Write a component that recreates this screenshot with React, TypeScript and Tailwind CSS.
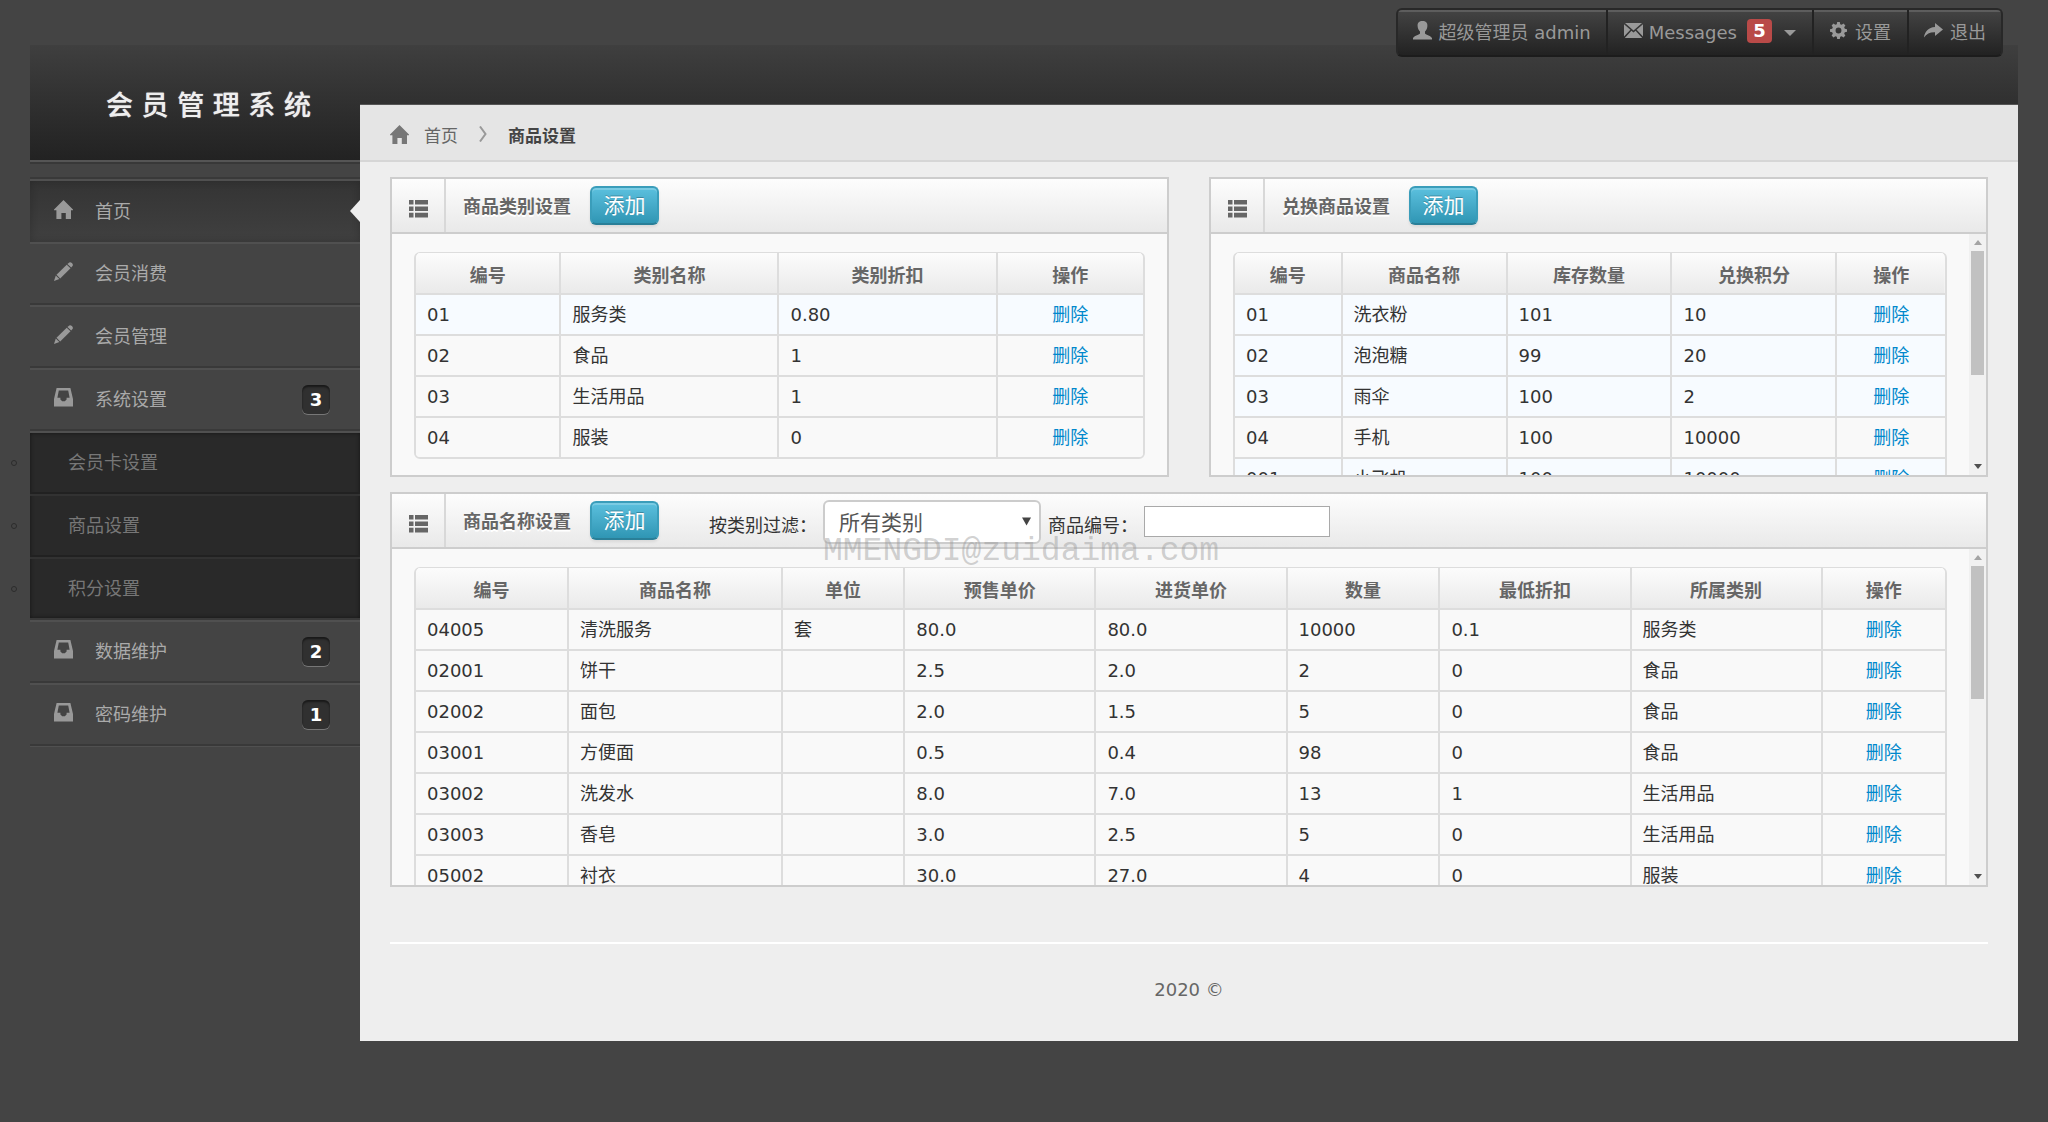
import React, { useState } from 'react';

interface IconProps {
    className?: string;
}

const HomeIcon: React.FC<IconProps> = ({ className }) => (
    <svg viewBox="0 0 19 19" className={className} fill="currentColor" aria-hidden="true">
        <path d="M9.5 0L19 9.4V10.2H17V19H11.8V13H7.4V19H2.4V10.2H0V9.4Z" />
    </svg>
);

const PencilIcon: React.FC<IconProps> = ({ className }) => (
    <svg viewBox="0 0 19 19" className={className} fill="currentColor" aria-hidden="true">
        <path d="M14.4 1.2Q16 -.6 17.9 1.1Q19.8 2.9 18.1 4.6L17.2 5.5L13.4 2Z" />
        <path d="M12.7 2.7L16.5 6.3L6.2 16.4L2.5 12.7Z" />
        <path d="M1.8 13.5L5.4 17L0 19Z" />
    </svg>
);

const InboxIcon: React.FC<IconProps> = ({ className }) => (
    <svg viewBox="0 0 19 19" className={className} fill="currentColor" aria-hidden="true">
        <path fillRule="evenodd" d="M2.6 0H16.4L19 11V18.5H0V11ZM4.8 2.4L3.4 9.8H6.4V11.4L8.2 13.2H10.8L12.6 11.4V9.8H15.6L14.2 2.4Z" />
    </svg>
);

const UserIcon: React.FC<IconProps> = ({ className }) => (
    <svg viewBox="0 0 19 19" className={className} fill="currentColor" aria-hidden="true">
        <path d="M9.5 0C12.8 0 14.6 1.8 14.4 5C14.3 7.4 13.3 9.3 12 10.6V12.4C12.9 13.8 18.4 14.7 19 17.2V18.6H0V17.2C.6 14.7 6.1 13.8 7 12.4V10.6C5.7 9.3 4.7 7.4 4.6 5C4.4 1.8 6.2 0 9.5 0Z" />
    </svg>
);

const EnvelopeIcon: React.FC<IconProps> = ({ className }) => (
    <svg viewBox="0 0 19 15" className={className} fill="currentColor" aria-hidden="true">
        <path d="M1 0H18L9.5 7.4ZM0 1.2L6.4 6.8L0 13.4ZM19 1.2V13.4L12.6 6.8ZM7.4 7.8L9.5 9.6L11.6 7.8L18.2 15H.8Z" />
    </svg>
);

const CogIcon: React.FC<IconProps> = ({ className }) => (
    <svg viewBox="0 0 18 18" className={className} fill="currentColor" aria-hidden="true">
        <path
            fillRule="evenodd"
            d="M7.6 0H10.4L10.8 2.3L12.4 3L14.3 1.7L16.3 3.7L15 5.6L15.7 7.2L18 7.6V10.4L15.7 10.8L15 12.4L16.3 14.3L14.3 16.3L12.4 15L10.8 15.7L10.4 18H7.6L7.2 15.7L5.6 15L3.7 16.3L1.7 14.3L3 12.4L2.3 10.8L0 10.4V7.6L2.3 7.2L3 5.6L1.7 3.7L3.7 1.7L5.6 3L7.2 2.3ZM9 5.9A3.1 3.1 0 1 0 9 12.1A3.1 3.1 0 1 0 9 5.9Z"
        />
    </svg>
);

const ShareIcon: React.FC<IconProps> = ({ className }) => (
    <svg viewBox="0 0 19 15" className={className} fill="currentColor" aria-hidden="true">
        <path d="M11 0L19 6.6L11 13V9.2C6 9 2.6 10.6 0 14.5C.6 8.6 4.4 4.4 11 4Z" />
    </svg>
);

const ListIcon: React.FC<IconProps> = ({ className }) => (
    <svg viewBox="0 0 19 18" className={className} fill="currentColor" aria-hidden="true">
        <path d="M0 0H4.5V4.6H0ZM6 0H19V4.6H6ZM0 6.4H4.5V11H0ZM6 6.4H19V11H6ZM0 12.8H4.5V17.4H0ZM6 12.8H19V17.4H6Z" />
    </svg>
);

interface Row {
    cells: string[];
    highlight?: boolean;
}

interface Column {
    title: string;
    width: string;
}

const CATEGORY_COLUMNS: Column[] = [
    { title: '编号', width: 'w-[20%]' },
    { title: '类别名称', width: 'w-[30%]' },
    { title: '类别折扣', width: 'w-[30%]' },
    { title: '操作', width: 'w-[20%]' },
];

const CATEGORY_ROWS: Row[] = [
    { cells: ['01', '服务类', '0.80'], highlight: true },
    { cells: ['02', '食品', '1'] },
    { cells: ['03', '生活用品', '1'] },
    { cells: ['04', '服装', '0'] },
];

const GIFT_COLUMNS: Column[] = [
    { title: '编号', width: 'w-[15%]' },
    { title: '商品名称', width: 'w-[23%]' },
    { title: '库存数量', width: 'w-[23%]' },
    { title: '兑换积分', width: 'w-[23%]' },
    { title: '操作', width: 'w-[15%]' },
];

const GIFT_ROWS: Row[] = [
    { cells: ['01', '洗衣粉', '101', '10'], highlight: true },
    { cells: ['02', '泡泡糖', '99', '20'], highlight: true },
    { cells: ['03', '雨伞', '100', '2'], highlight: true },
    { cells: ['04', '手机', '100', '10000'] },
    { cells: ['001', '小飞机', '100', '10000'], highlight: true },
];

const GOODS_COLUMNS: Column[] = [
    { title: '编号', width: 'w-[10%]' },
    { title: '商品名称', width: 'w-[14%]' },
    { title: '单位', width: 'w-[8%]' },
    { title: '预售单价', width: 'w-[12.5%]' },
    { title: '进货单价', width: 'w-[12.5%]' },
    { title: '数量', width: 'w-[10%]' },
    { title: '最低折扣', width: 'w-[12.5%]' },
    { title: '所属类别', width: 'w-[12.5%]' },
    { title: '操作', width: 'w-[8%]' },
];

const GOODS_ROWS: Row[] = [
    { cells: ['04005', '清洗服务', '套', '80.0', '80.0', '10000', '0.1', '服务类'] },
    { cells: ['02001', '饼干', '', '2.5', '2.0', '2', '0', '食品'] },
    { cells: ['02002', '面包', '', '2.0', '1.5', '5', '0', '食品'] },
    { cells: ['03001', '方便面', '', '0.5', '0.4', '98', '0', '食品'] },
    { cells: ['03002', '洗发水', '', '8.0', '7.0', '13', '1', '生活用品'] },
    { cells: ['03003', '香皂', '', '3.0', '2.5', '5', '0', '生活用品'] },
    { cells: ['05002', '衬衣', '', '30.0', '27.0', '4', '0', '服装'] },
];

const DataTable: React.FC<{ columns: Column[]; rows: Row[] }> = ({ columns, rows }) => (
    <div className="border-2 border-t border-[#ddd] rounded-md overflow-hidden">
        <table className="w-full table-fixed border-separate border-spacing-0">
            <thead>
                <tr className="bg-linear-to-b from-[#fcfcfc] to-[#e9e9e9]">
                    {columns.map((col) => (
                        <th
                            key={col.title}
                            className={`${col.width} h-[42px] p-0 pt-[6px] border-b-2 border-r-2 last:border-r-0 border-[#ddd] font-bold text-[#666] text-center`}
                        >
                            {col.title}
                        </th>
                    ))}
                </tr>
            </thead>
            <tbody className="text-[#333]">
                {rows.map((row) => (
                    <tr key={row.cells[0]} className={`group ${row.highlight ? 'bg-[#f7fbff]' : 'bg-[#f9f9f9]'}`}>
                        {row.cells.map((cell, i) => (
                            <td
                                key={i}
                                className="h-[41px] group-last:h-[39px] px-[11px] border-b-2 group-last:border-b-0 border-r-2 border-[#ddd]"
                            >
                                {cell}
                            </td>
                        ))}
                        <td className="border-b-2 group-last:border-b-0 border-[#ddd] text-center">
                            <a href="#delete" className="text-[#0088cc]">删除</a>
                        </td>
                    </tr>
                ))}
            </tbody>
        </table>
    </div>
);

interface PanelProps {
    title: string;
    tools?: React.ReactNode;
    children: React.ReactNode;
}

const Panel: React.FC<PanelProps> = ({ title, tools, children }) => (
    <section className="flex flex-col border-2 border-[#cdcdcd] bg-[#f9f9f9] min-w-0">
        <div className="flex items-center h-[55px] border-b-2 border-[#cdcdcd] bg-linear-to-b from-[#fdfdfd] to-[#e9e9e9]">
            <span className="self-stretch w-[54px] flex items-center justify-center border-r-2 border-[#d8d8d8] text-[#666]">
                <ListIcon className="w-[19px] h-[18px] mt-[6px]" />
            </span>
            <h5 className="pl-[17px] pr-[19px] pt-[2px] font-bold text-[#666] [text-shadow:0_2px_0_#fff]">{title}</h5>
            <button
                type="button"
                className="w-[69px] h-[39px] rounded-md border-2 border-[#3a9dba] border-b-[#2a7f98] bg-linear-to-b from-[#5bc0de] to-[#2f96b4] text-[21px] leading-8 text-white shadow-[inset_0_2px_0_rgba(255,255,255,0.2),0_2px_3px_rgba(0,0,0,0.08)] [text-shadow:0_-1px_0_rgba(0,0,0,0.25)]"
            >
                添加
            </button>
            {tools}
        </div>
        {children}
    </section>
);

// Scrolled panel body with a classic grey scrollbar on its right side
const ScrollBody: React.FC<{ height: string; thumb: string; children: React.ReactNode }> = ({ height, thumb, children }) => (
    <div className={`flex overflow-hidden ${height}`}>
        <div className="flex-1 min-w-0 px-[22px] pt-[18px]">{children}</div>
        <div className="w-[17px] shrink-0 flex flex-col items-center bg-[#f1f1f1]">
            <svg viewBox="0 0 8 5" className="w-2 h-[5px] my-[6px] shrink-0 text-[#a3a3a3]" fill="currentColor" aria-hidden="true">
                <path d="M4 0L8 5H0Z" />
            </svg>
            <div className={`w-[13px] shrink-0 bg-[#c1c1c1] ${thumb}`} />
            <svg viewBox="0 0 8 5" className="w-2 h-[5px] mt-auto mb-[6px] shrink-0 text-[#505050]" fill="currentColor" aria-hidden="true">
                <path d="M0 0H8L4 5Z" />
            </svg>
        </div>
    </div>
);

const MENU_ITEM = 'flex items-center h-[63px] border-t-2 border-t-[#505050] border-b-2 border-b-[#393939] pl-6 pr-[30px] text-[#aaa]';

const MenuBadge: React.FC<{ count: number }> = ({ count }) => (
    <span className="ml-auto w-7 h-[29px] flex items-center justify-center rounded-md bg-[#303030] font-bold text-white shadow-[inset_0_2px_2px_rgba(0,0,0,0.5),0_1px_0_#777]">
        {count}
    </span>
);

const Sidebar: React.FC = () => (
    <nav className="w-[330px] shrink-0 pt-[13px]">
        <ul className="border-t-2 border-[#393939]">
            <li className="relative">
                <a
                    href="#home"
                    className="flex items-center h-[63px] border-t-2 border-[#505050] pl-6 text-[#aaa] bg-linear-to-b from-[#343434] to-[#404040] shadow-[inset_0_0_8px_rgba(0,0,0,0.2)]"
                >
                    <HomeIcon className="w-[19px] h-[19px] mb-1 text-[#999]" />
                    <span className="pl-[22px]">首页</span>
                </a>
                <svg viewBox="0 0 10 22" className="absolute right-0 top-[21px] w-[10px] h-[22px]" fill="#eee" aria-hidden="true">
                    <path d="M10 0L0 11L10 22Z" />
                </svg>
            </li>
            <li>
                <a href="#consume" className={MENU_ITEM}>
                    <PencilIcon className="w-[19px] h-[19px] mb-1 text-[#999]" />
                    <span className="pl-[22px]">会员消费</span>
                </a>
            </li>
            <li>
                <a href="#members" className={MENU_ITEM}>
                    <PencilIcon className="w-[19px] h-[19px] mb-1 text-[#999]" />
                    <span className="pl-[22px]">会员管理</span>
                </a>
            </li>
            <li>
                <a href="#settings" className={MENU_ITEM}>
                    <InboxIcon className="w-[19px] h-[19px] mb-1 text-[#999]" />
                    <span className="pl-[22px]">系统设置</span>
                    <MenuBadge count={3} />
                </a>
                <ul className="border-t-2 border-t-[#505050] border-b-2 border-b-[#393939] bg-[#292929] text-[#777] shadow-[inset_0_0_4px_rgba(0,0,0,0.5)]">
                    {['会员卡设置', '商品设置', '积分设置'].map((label) => (
                        <li
                            key={label}
                            className="relative h-[63px] first:h-[61px] last:h-[61px] border-t-2 border-t-[#323232] first:border-t-0 border-b-2 border-b-[#212121] last:border-b-0"
                        >
                            <span className="absolute -left-[19px] top-[27px] w-[6px] h-[6px] rounded-full border border-[#2c2c2c]" />
                            <a href="#submenu" className="flex items-center h-full pl-[38px]">{label}</a>
                        </li>
                    ))}
                </ul>
            </li>
            <li>
                <a href="#data" className={MENU_ITEM}>
                    <InboxIcon className="w-[19px] h-[19px] mb-1 text-[#999]" />
                    <span className="pl-[22px]">数据维护</span>
                    <MenuBadge count={2} />
                </a>
            </li>
            <li className="border-b border-[#505050]">
                <a href="#password" className={MENU_ITEM}>
                    <InboxIcon className="w-[19px] h-[19px] mb-1 text-[#999]" />
                    <span className="pl-[22px]">密码维护</span>
                    <MenuBadge count={1} />
                </a>
            </li>
        </ul>
    </nav>
);

const NAV_ITEM = 'flex items-center border-l-2 border-[#222] first:border-l-0 shadow-[inset_0_2px_0_rgba(255,255,255,0.14)]';

const TopNav: React.FC = () => (
    <nav className="absolute top-2 right-[45px] flex h-[49px] rounded-md border-2 border-[#282828] border-b-[#1c1c1c] bg-linear-to-b from-[#444] to-[#222] text-[#999] overflow-hidden">
        <a href="#profile" className={`${NAV_ITEM} px-[15px]`}>
            <UserIcon className="w-[19px] h-[19px] mb-1" />
            <span className="pl-[7px]">超级管理员 admin</span>
        </a>
        <a href="#messages" className={`${NAV_ITEM} px-4`}>
            <EnvelopeIcon className="w-[19px] h-[15px] mb-1" />
            <span className="pl-[6px]">Messages</span>
            <span className="ml-[10px] w-[25px] h-6 mb-1 flex items-center justify-center rounded-sm bg-[#b94a48] font-bold text-white">5</span>
            <svg viewBox="0 0 12 6" className="w-3 h-[6px] ml-3" fill="currentColor" aria-hidden="true">
                <path d="M0 0H12L6 6Z" />
            </svg>
        </a>
        <a href="#config" className={`${NAV_ITEM} px-4`}>
            <CogIcon className="w-[17px] h-[17px] mb-1" />
            <span className="pl-2">设置</span>
        </a>
        <a href="#logout" className={`${NAV_ITEM} px-[15px]`}>
            <ShareIcon className="w-[19px] h-[15px] mb-1" />
            <span className="pl-[7px]">退出</span>
        </a>
    </nav>
);

const GoodsFilter: React.FC = () => {
    const [category, setCategory] = useState('all');
    const [code, setCode] = useState('');

    return (
        <div className="flex items-center ml-[50px] pt-[2px] text-[#333]">
            <label htmlFor="category" className="w-[114px] pt-2 whitespace-nowrap">按类别过滤：</label>
            <div className="relative">
                <select
                    id="category"
                    value={category}
                    onChange={(e) => setCategory(e.target.value)}
                    className="appearance-none block w-[218px] h-11 pl-[14px] pt-[2px] border-2 border-[#ccc] rounded-md bg-white text-[21px] text-[#555]"
                >
                    <option value="all">所有类别</option>
                    <option value="service">服务类</option>
                    <option value="food">食品</option>
                </select>
                <svg viewBox="0 0 10 9" className="absolute right-[10px] top-[17px] w-[9px] h-[9px]" fill="#444" aria-hidden="true">
                    <path d="M0 0H10L5 9Z" />
                </svg>
                <span
                    aria-hidden="true"
                    className="absolute left-0 top-8 pointer-events-none font-['Liberation_Mono',monospace] text-[33px] leading-10 text-[#999]/45"
                >
                    MMENGDI@zuidaima.com
                </span>
            </div>
            <label htmlFor="code" className="w-24 ml-[7px] pt-2 whitespace-nowrap">商品编号：</label>
            <input
                id="code"
                type="text"
                value={code}
                onChange={(e) => setCode(e.target.value)}
                className="w-[186px] h-[31px] border border-[#a9a9a9] bg-white px-1"
            />
        </div>
    );
};

const App: React.FC = () => (
    <div className="relative min-h-screen bg-[#444] px-[30px] pt-[45px] pb-20 font-['DejaVu_Sans','Noto_Sans_CJK_SC',sans-serif] text-[18px] leading-6">
        <header className="h-[119px] border-b-2 border-[#383838]">
            <div className="h-[117px] flex items-center border-b-2 border-[#555] bg-linear-to-b from-[#3f3f3f] to-[#222] pl-[76px]">
                <h1 className="pt-[6px] text-[27px] leading-9 font-medium text-[#eee] [text-shadow:0_0_1px_#ddd]">会 员 管 理 系 统</h1>
            </div>
        </header>
        <TopNav />

        <div className="flex items-start">
            <Sidebar />
            <main className="relative flex-1 min-w-0 -mt-[60px] border-t border-[#555] bg-[#eee]">
                <div className="flex items-center h-[57px] px-[30px] bg-[#e5e5e5] border-b-2 border-[#d6d6d6] text-[17px]">
                    <HomeIcon className="w-[19px] h-[19px] mt-1 text-[#777]" />
                    <a href="#home" className="pl-[15px] pt-[6px] text-[#666]">首页</a>
                    <svg viewBox="0 0 8 16" className="w-2 h-4 mx-[21px] mt-[2px]" fill="none" stroke="#999" strokeWidth="2" aria-hidden="true">
                        <path d="M1 .5L6.5 8L1 15.5" />
                    </svg>
                    <span className="pt-[6px] font-bold text-[#444]">商品设置</span>
                </div>

                <div className="px-[30px] pt-[15px] pb-[39px]">
                    <div className="grid grid-cols-2 gap-10">
                        <Panel title="商品类别设置">
                            <div className="px-[22px] pt-[18px] pb-4">
                                <DataTable columns={CATEGORY_COLUMNS} rows={CATEGORY_ROWS} />
                            </div>
                        </Panel>
                        <Panel title="兑换商品设置">
                            <ScrollBody height="h-[241px]" thumb="h-[124px]">
                                <DataTable columns={GIFT_COLUMNS} rows={GIFT_ROWS} />
                            </ScrollBody>
                        </Panel>
                    </div>

                    <div className="grid mt-[15px]">
                        <Panel title="商品名称设置" tools={<GoodsFilter />}>
                            <ScrollBody height="h-[336px]" thumb="h-[133px]">
                                <DataTable columns={GOODS_COLUMNS} rows={GOODS_ROWS} />
                            </ScrollBody>
                        </Panel>
                    </div>

                    <footer className="mt-[55px] pt-[34px] border-t-2 border-white text-center text-[#666]">2020 ©</footer>
                </div>
            </main>
        </div>
    </div>
);

export default App;
